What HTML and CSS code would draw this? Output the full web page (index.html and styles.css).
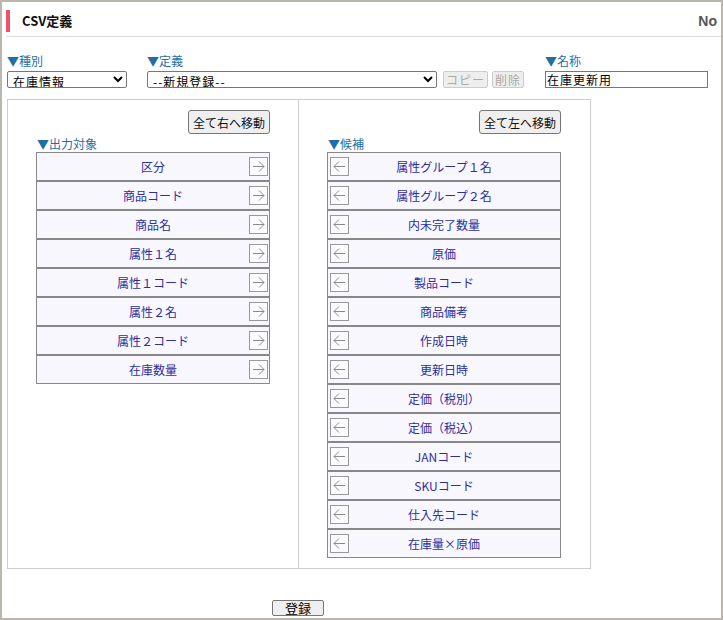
FILE: index.html
```html
<!DOCTYPE html>
<html lang="ja">
  <head>
    <meta charset="UTF-8" />
    <meta name="viewport" content="width=device-width, initial-scale=1.0" />
    <link rel="stylesheet" href="styles.css">
    <title>CSV定義</title>
  </head>
  <body>
    <div class="frame">
      <div class="header">
        <h2 class="title">CSV定義</h2>
        <span class="no">No</span>
      </div>

      <div class="form-row">
        <div class="field field-kind">
          <label for="kind">▼種別</label>
          <select id="kind" class="sel-kind">
            <option>在庫情報</option>
          </select>
        </div>
        <div class="field field-def">
          <label for="def">▼定義</label>
          <div class="def-line">
            <select id="def" class="sel-def">
              <option>--新規登録--</option>
            </select>
            <button class="btn-small" disabled>コピー</button>
            <button class="btn-small" disabled>削除</button>
          </div>
        </div>
        <div class="field field-name">
          <label for="name">▼名称</label>
          <input type="text" id="name" class="inp-name" value="在庫更新用" />
        </div>
      </div>

      <div class="panel">
        <div class="col">
          <div class="col-inner">
            <div class="col-top"><button class="btn-move">全て右へ移動</button></div>
            <div class="col-label">▼出力対象</div>
            <ul class="list" id="outList"></ul>
          </div>
        </div>
        <div class="col col-right">
          <div class="col-inner">
            <div class="col-top"><button class="btn-move">全て左へ移動</button></div>
            <div class="col-label">▼候補</div>
            <ul class="list" id="candList"></ul>
          </div>
        </div>
      </div>

      <div class="footer">
        <button class="btn-save">登録</button>
      </div>
    </div>

    <script>
      var outItems = ["区分", "商品コード", "商品名", "属性１名", "属性１コード", "属性２名", "属性２コード", "在庫数量"];
      var candItems = ["属性グループ１名", "属性グループ２名", "内未完了数量", "原価", "製品コード", "商品備考", "作成日時", "更新日時", "定価（税別）", "定価（税込）", "JANコード", "SKUコード", "仕入先コード", "在庫量×原価"];

      var right = '<svg width="15" height="15" viewBox="0 0 15 15"><path d="M2 7.5h11M8 2.5l5 5-5 5" fill="none" stroke="#8a8a8a" stroke-width="1"/></svg>';
      var left = '<svg width="15" height="15" viewBox="0 0 15 15"><path d="M13 7.5H2M7 2.5l-5 5 5 5" fill="none" stroke="#8a8a8a" stroke-width="1"/></svg>';

      function fill(id, items, icon, side) {
        // build the rows of one list
        var html = "";
        for (var i = 0; i < items.length; i++) {
          html += '<li class="item item-' + side + '"><span class="item-text">' + items[i] +
            '</span><span class="arrow">' + icon + '</span></li>';
        }
        document.getElementById(id).innerHTML = html;
      }

      fill("outList", outItems, right, "out");
      fill("candList", candItems, left, "cand");
    </script>
  </body>
</html>
```

FILE: styles.css
```css
* {
  box-sizing: border-box;
}

body {
  margin: 0;
  font-family: "Noto Sans CJK JP", "Noto Sans", sans-serif;
  font-size: 12px;
  color: #222;
  background: #fff;
}

.frame {
  width: 723px;
  height: 620px;
  border: 2px solid #bbb7ae;
  background: #fff;
}

.header {
  display: flex;
  align-items: center;
  justify-content: space-between;
  margin: 8px 0 0 4px;
  padding-bottom: 4px;
  border-bottom: 1px solid #ddd;
}

.title {
  margin: 0;
  height: 22px;
  line-height: 22px;
  border-left: 4px solid #f2506c;
  padding-left: 12px;
  font-size: 13px;
  font-weight: bold;
  color: #111;
}

.no {
  font-family: "Liberation Sans", Arial, sans-serif;
  font-weight: bold;
  font-size: 14px;
  color: #555;
  margin-right: 4px;
}

.form-row {
  display: flex;
  padding: 16px 0 0 5px;
}

.field label {
  display: block;
  color: #1f6ea4;
  font-size: 12px;
  line-height: 16px;
  margin-bottom: 2px;
}

.field-kind {
  width: 140px;
}

.field-def {
  width: 398px;
}

.def-line {
  display: flex;
  gap: 4px;
}

select,
input {
  font-family: "Noto Sans CJK JP", monospace;
  font-size: 12px;
  line-height: 15px;
  height: 17px;
  padding: 0 1px;
  border: 1px solid #767676;
  border-radius: 2px;
  background: #fff;
  color: #000;
  letter-spacing: 1px;
}

.sel-kind {
  width: 120px;
}

.sel-def {
  width: 290px;
  margin-right: 2px;
}

.inp-name {
  width: 163px;
  border-radius: 0;
}

.btn-small {
  height: 17px;
  padding: 0 2px;
  font-family: "Noto Sans CJK JP", sans-serif;
  font-size: 12px;
  line-height: 14px;
  color: #aaa;
  background: #eee;
  border: 1px solid #ccc;
  border-radius: 2px;
  letter-spacing: 1px;
}

.panel {
  display: flex;
  width: 584px;
  height: 470px;
  margin: 9px 0 0 5px;
  border: 1px solid #ccc;
}

.col {
  width: 291px;
  padding: 10px 0 0 28px;
  border-right: 1px solid #ccc;
}

.col-right {
  border-right: none;
}

.col-inner {
  width: 234px;
}

.col-top {
  display: flex;
  justify-content: flex-end;
}

.btn-move {
  height: 24px;
  padding: 0 4px;
  font-family: "Noto Sans CJK JP", sans-serif;
  font-size: 12px;
  color: #111;
  background: #efefef;
  border: 1px solid #767676;
  border-radius: 3px;
}

.col-label {
  color: #1f6ea4;
  line-height: 16px;
  margin-top: 2px;
  padding-left: 1px;
}

.list {
  list-style: none;
  margin: 0;
  padding: 0;
}

.item {
  position: relative;
  height: 29px;
  line-height: 27px;
  border: 1px solid #888;
  background: #f7f7fd;
  text-align: center;
  color: #2e2e9e;
}

.arrow {
  position: absolute;
  top: 4px;
  width: 19px;
  height: 19px;
  border: 1px solid #999;
  background: #fbfbfe;
  display: flex;
  align-items: center;
  justify-content: center;
}

.item-out .arrow {
  right: 1px;
}

.item-cand .arrow {
  left: 2px;
}

.footer {
  padding: 30px 0 0 270px;
}

.btn-save {
  width: 52px;
  height: 16px;
  padding: 0;
  font-family: "Noto Sans CJK JP", sans-serif;
  font-size: 13px;
  line-height: 13px;
  color: #000;
  background: #efefef;
  border: 1px solid #767676;
  border-radius: 2px;
}
```
